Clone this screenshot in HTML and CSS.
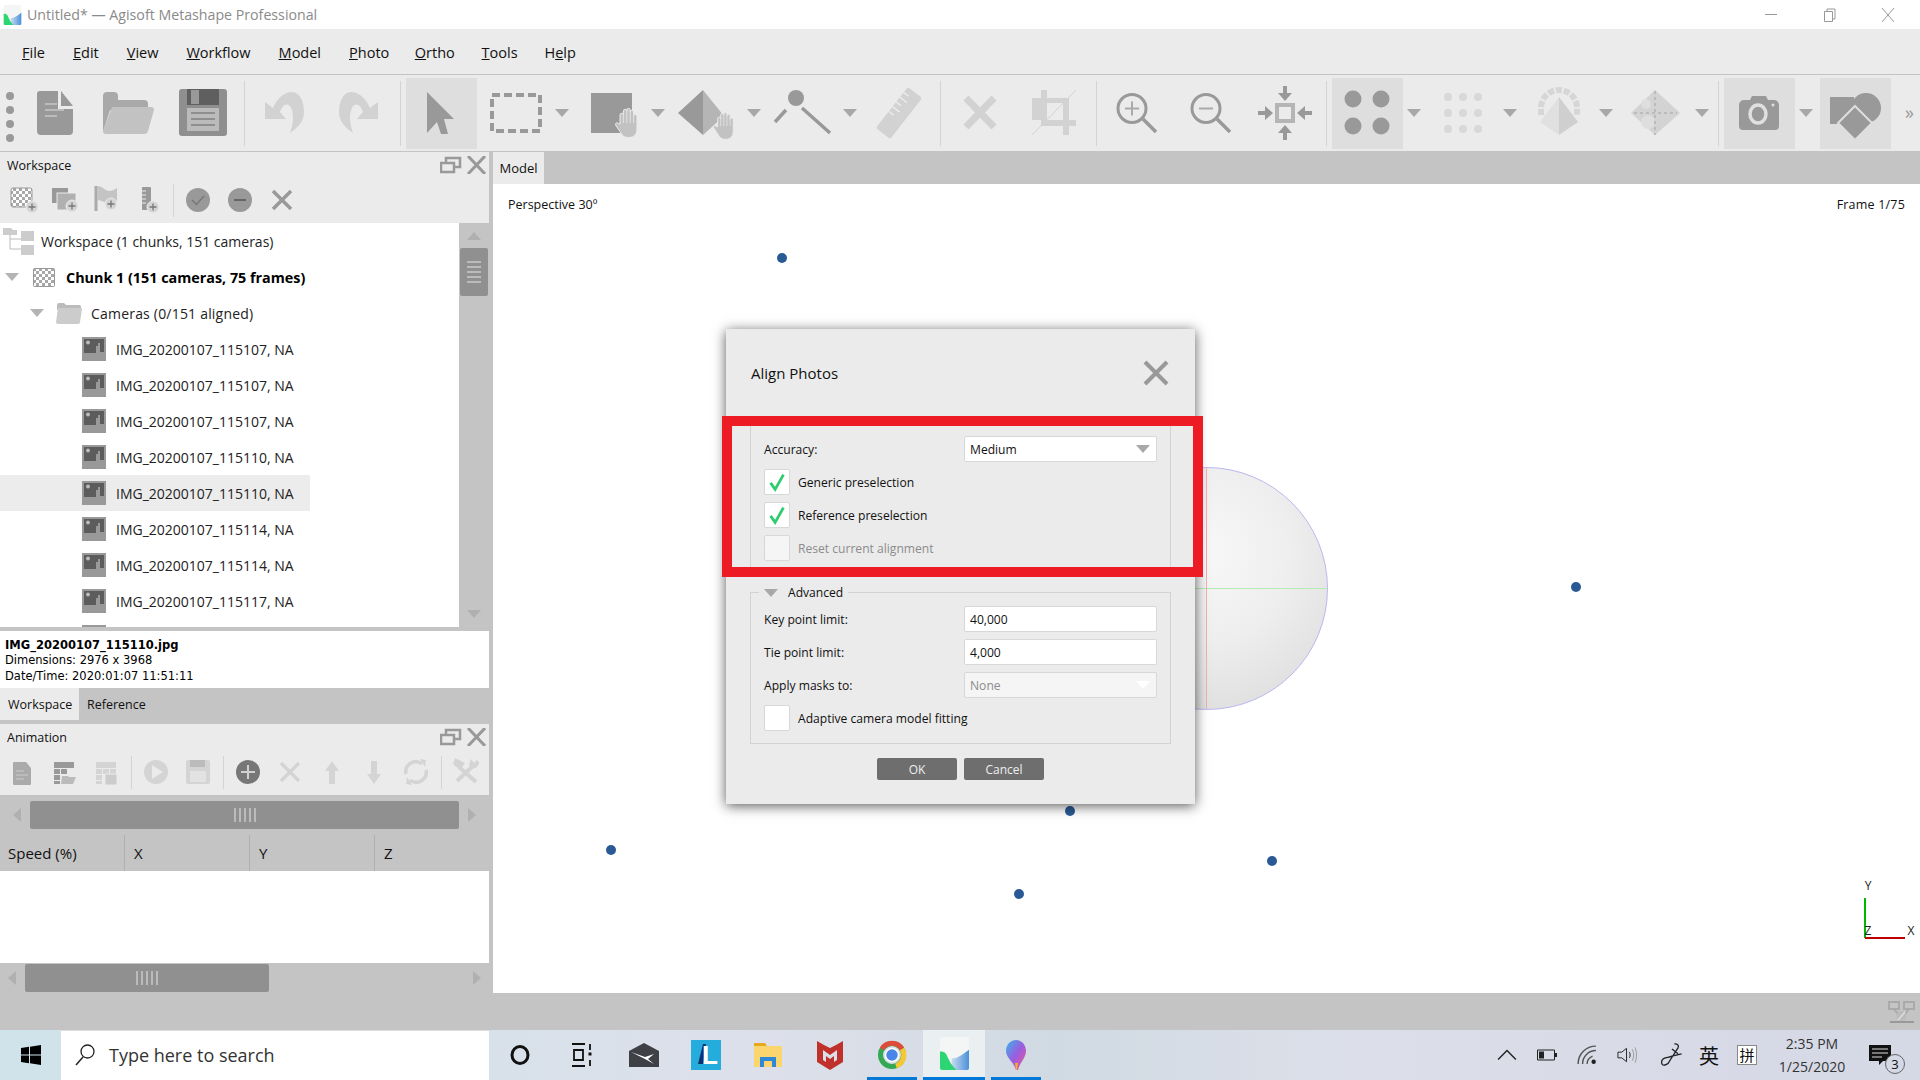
FILE: index.html
```html
<!DOCTYPE html>
<html lang="en">
<head>
    <meta charset="UTF-8">
    <title>Untitled* — Agisoft Metashape Professional</title>
    <link rel="stylesheet" href="styles.css">
</head>
<body>
    <svg class="defs" aria-hidden="true">
        <defs>
            <pattern id="chess" width="6" height="6" patternUnits="userSpaceOnUse">
                <rect width="6" height="6" fill="#fff"/>
                <rect width="3" height="3" fill="#a8a8a8"/>
                <rect x="3" y="3" width="3" height="3" fill="#a8a8a8"/>
            </pattern>
            <linearGradient id="msBlue" x1="0" y1="0" x2="1" y2="0">
                <stop offset="0" stop-color="#c8dcf0"/>
                <stop offset="1" stop-color="#4a90d9"/>
            </linearGradient>
            <linearGradient id="paint3d" x1="0" y1="0" x2="1" y2="1">
                <stop offset="0" stop-color="#38b6e8"/>
                <stop offset="0.5" stop-color="#9a5ce0"/>
                <stop offset="1" stop-color="#ef5a8a"/>
            </linearGradient>
            <symbol id="hand" viewBox="0 0 25 30">
                <path fill="#c2c2c2" stroke="#ebebeb" stroke-width="1" d="M5 16V7a1.7 1.7 0 0 1 3.4 0V3a1.7 1.7 0 0 1 3.4 0V2a1.7 1.7 0 0 1 3.4 0V4a1.7 1.7 0 0 1 3.4 0V8a1.7 1.7 0 0 1 3.4 0V21c0 5-3 8.500-8 8.500s-7-2-9-6L.6 17c-.8-2 2-3 3-1.500z"/>
                <path stroke="#e2e2e2" stroke-width="1" d="M8.400 6V15M11.800 3V15M15.200 3V15M18.600 6V15"/>
            </symbol>
            <symbol id="thumb" viewBox="0 0 24 24">
                <rect width="24" height="24" fill="#999"/>
                <path fill="#5c5c5c" d="M2 2h20v4h-6v3h-2v7H2z"/>
                <path fill="#5c5c5c" d="M18 6h4v9h-4z"/>
                <circle cx="6" cy="5.500" r="2" fill="#bbb"/>
            </symbol>
            <symbol id="appicon" viewBox="0 0 30 34">
                <rect width="30" height="34" rx="2" fill="#f4f6f6"/>
                <path fill="url(#msBlue)" d="M12 22c6 0 10-3 18-9v19a2 2 0 0 1-2 2H12z"/>
                <path fill="#2ed573" d="M0 15c6-1 7 4 9 8 2 5 5 8 8 11H2a2 2 0 0 1-2-2z"/>
            </symbol>
            <symbol id="plus" viewBox="0 0 14 14">
                <circle cx="7" cy="7" r="6" fill="#d4d4d4" stroke="#ebebeb"/>
                <path stroke="#777" stroke-width="1.300" d="M3.500 7h7M7 3.500v7"/>
            </symbol>
        </defs>
    </svg>

    <div class="titlebar">
        <svg class="title-icon"><use href="#appicon"/></svg>
        <span class="title-text">Untitled* — Agisoft Metashape Professional</span>
        <div class="win-btns">
            <svg class="win-btn" viewBox="0 0 14 14"><path d="M1 6.500h12" stroke="#999"/></svg>
            <svg class="win-btn" viewBox="0 0 14 14"><path d="M1.500 3.500h8v10h-8zM4 3.500V1h8v10h-2.500" fill="none" stroke="#999"/></svg>
            <svg class="win-btn" viewBox="0 0 14 14"><path d="M1 0l12 14M13 0L1 14" stroke="#999"/></svg>
        </div>
    </div>

    <nav class="menubar">
        <a><u>F</u>ile</a>
        <a><u>E</u>dit</a>
        <a><u>V</u>iew</a>
        <a><u>W</u>orkflow</a>
        <a><u>M</u>odel</a>
        <a><u>P</u>hoto</a>
        <a><u>O</u>rtho</a>
        <a><u>T</u>ools</a>
        <a>H<u>e</u>lp</a>
    </nav>

    <div class="toolbar">
        <div class="grip"><i></i><i></i><i></i><i></i></div>

        <div class="tool"><svg viewBox="0 0 71 71">
            <path fill="#999" d="M17 16a3 3 0 0 1 3-3h18v18h15v22a4 4 0 0 1-4 4H21a4 4 0 0 1-4-4z"/>
            <path fill="#999" d="M41 13l12 15H41z"/>
            <path stroke="#bbb" stroke-width="2" d="M25 26h12M25 32h19M25 38h12"/>
        </svg></div>
        <div class="tool"><svg viewBox="0 0 71 71">
            <path fill="#a9a9a9" d="M9 18a4 4 0 0 1 4-4h7a4 4 0 0 1 4 4v4h26a4 4 0 0 1 4 4v6H16L9 54z"/>
            <path fill="#c2c2c2" d="M18 29h39a3 3 0 0 1 3 3l-6 21a4 4 0 0 1-4 3H12a3 3 0 0 1-3-3z"/>
        </svg></div>
        <div class="tool"><svg viewBox="0 0 71 71">
            <rect x="11" y="11" width="48" height="47" rx="3" fill="#8f8f8f"/>
            <rect x="19" y="11" width="32" height="16" fill="#5f5f5f"/>
            <rect x="23" y="12" width="8" height="14" fill="#999"/>
            <rect x="19" y="30" width="32" height="23" fill="#bbb"/>
            <path stroke="#8f8f8f" stroke-width="2" d="M23 35h24M23 41h24M23 47h24"/>
        </svg></div>
        <div class="sep"></div>
        <div class="tool"><svg viewBox="0 0 71 71">
            <path fill="#d2d2d2" d="M15 24l8 6c5-12 13-16 19-16 8 0 12 10 12 20s-7 16-14 21c4-11 4-21 0-27-4-4-8 0-10 6l6 7H15z"/>
        </svg></div>
        <div class="tool"><svg viewBox="0 0 71 71">
            <path fill="#d2d2d2" transform="matrix(-1 0 0 1 69 0)" d="M15 24l8 6c5-12 13-16 19-16 8 0 12 10 12 20s-7 16-14 21c4-11 4-21 0-27-4-4-8 0-10 6l6 7H15z"/>
        </svg></div>
        <div class="sep"></div>
        <div class="tool active"><svg viewBox="0 0 71 71">
            <path fill="#999" d="M21 14l27 27H38l4 15h-7l-4-12-10 11z"/>
        </svg></div>
        <div class="tool"><svg viewBox="0 0 71 71">
            <rect x="12" y="17" width="48" height="36" fill="none" stroke="#999" stroke-width="4" stroke-dasharray="8 4"/>
        </svg></div>
        <div class="drop"><span class="tri"></span></div>
        <div class="tool"><svg viewBox="0 0 71 71">
            <rect x="15" y="15" width="41" height="40" fill="#999"/>
            <use href="#hand" x="39" y="30" width="25" height="30"/>
        </svg></div>
        <div class="drop"><span class="tri"></span></div>
        <div class="tool"><svg viewBox="0 0 71 71">
            <path fill="#999" d="M31 12L6 35l25 22z"/>
            <path fill="#b5b5b5" d="M31 12l21 26-21 19z"/>
            <use href="#hand" x="41" y="34" width="23" height="28"/>
        </svg></div>
        <div class="drop"><span class="tri"></span></div>
        <div class="tool"><svg viewBox="0 0 71 71">
            <circle cx="28" cy="20" r="8" fill="#999"/>
            <path stroke="#999" stroke-width="3.500" d="M18 32L7 44M34 30l28 25"/>
        </svg></div>
        <div class="drop"><span class="tri"></span></div>
        <div class="tool"><svg viewBox="0 0 71 71">
            <g transform="rotate(38 35 35)">
                <rect x="26" y="9" width="18" height="52" rx="2" fill="#d2d2d2"/>
                <path stroke="#ebebeb" stroke-width="1.500" d="M26 16h6M26 22h9M26 28h6M26 34h9M26 40h6"/>
            </g>
        </svg></div>
        <div class="sep"></div>
        <div class="tool"><svg viewBox="0 0 71 71">
            <path stroke="#d2d2d2" stroke-width="7" d="M20 20l28 29M48 20L20 49"/>
        </svg></div>
        <div class="tool"><svg viewBox="0 0 71 71">
            <path fill="#d2d2d2" d="M21 12h6v8h22v22h7v6h-7v9h-6v-9H21v-6h-9V20h9zM27 25v17h16V25z"/>
            <path stroke="#d2d2d2" d="M12 57L56 12"/>
        </svg></div>
        <div class="sep"></div>
        <div class="tool"><svg viewBox="0 0 71 71">
            <circle cx="30" cy="30.500" r="14" fill="none" stroke="#999" stroke-width="3"/>
            <path stroke="#999" stroke-width="3.500" d="M41 41l13 13"/>
            <path stroke="#aaa" stroke-width="2" d="M23 30.500h14M30 23.500v14"/>
        </svg></div>
        <div class="tool"><svg viewBox="0 0 71 71">
            <circle cx="30" cy="30.500" r="14" fill="none" stroke="#999" stroke-width="3"/>
            <path stroke="#999" stroke-width="3.500" d="M41 41l13 13"/>
            <path stroke="#aaa" stroke-width="2" d="M23 30.500h14"/>
        </svg></div>
        <div class="tool"><svg viewBox="0 0 71 71">
            <rect x="27" y="27" width="16" height="16" fill="none" stroke="#b5b5b5" stroke-width="4"/>
            <path fill="#999" d="M33 8h4v7h5l-7 8-7-8h5zM33 62h4v-7h5l-7-8-7 8h5zM8 33v4h7v5l8-7-8-7v5zM62 33v4h-7v5l-8-7 8-7v5z"/>
        </svg></div>
        <div class="sep"></div>
        <div class="tool active"><svg viewBox="0 0 71 71">
            <circle cx="21" cy="21" r="8.500" fill="#999"/>
            <circle cx="49" cy="21" r="8.500" fill="#999"/>
            <circle cx="21" cy="48" r="8.500" fill="#999"/>
            <circle cx="49" cy="48" r="8.500" fill="#999"/>
        </svg></div>
        <div class="drop"><span class="tri"></span></div>
        <div class="tool"><svg viewBox="0 0 71 71" fill="#d8d8d8">
            <circle cx="20" cy="19" r="4"/><circle cx="35" cy="19" r="4"/><circle cx="50" cy="19" r="4"/>
            <circle cx="20" cy="35" r="4"/><circle cx="35" cy="35" r="4"/><circle cx="50" cy="35" r="4"/>
            <circle cx="20" cy="51" r="4"/><circle cx="35" cy="51" r="4"/><circle cx="50" cy="51" r="4"/>
        </svg></div>
        <div class="drop"><span class="tri"></span></div>
        <div class="tool"><svg viewBox="0 0 71 71">
            <path fill="none" stroke="#d6d6d6" stroke-width="6" stroke-dasharray="6 2" d="M17 37v-7a18 18 0 0 1 36 0v7"/>
            <path fill="#e0e0e0" d="M35 19L16 44l19 13z"/>
            <path fill="#cfcfcf" d="M35 19l19 25-19 13z"/>
        </svg></div>
        <div class="drop"><span class="tri"></span></div>
        <div class="tool"><svg viewBox="0 0 71 71">
            <path fill="#d3d3d3" d="M35 12L11 35l24 22 25-22z"/>
            <circle cx="26" cy="26" r="5" fill="#dedede"/>
            <circle cx="28" cy="44" r="7" fill="#dedede"/>
            <path stroke="#bbb" stroke-width="2" stroke-dasharray="3 3" d="M35 13v44M14 35h43"/>
        </svg></div>
        <div class="drop"><span class="tri"></span></div>
        <div class="sep sep-tight"></div>
        <div class="tool active"><svg viewBox="0 0 71 71">
            <path fill="#999" d="M15 27a5 5 0 0 1 5-5h6l2-4h14l2 4h6a5 5 0 0 1 5 5v21a4 4 0 0 1-4 4H19a4 4 0 0 1-4-4z"/>
            <ellipse cx="34" cy="36" rx="8" ry="9" fill="none" stroke="#e0e0e0" stroke-width="3.500"/>
            <circle cx="49" cy="27" r="1.500" fill="#e0e0e0"/>
        </svg></div>
        <div class="drop"><span class="tri"></span></div>
        <div class="tool active"><svg viewBox="0 0 71 71">
            <rect x="10" y="19" width="24" height="27" fill="#999"/>
            <circle cx="46" cy="30" r="15" fill="#999"/>
            <path fill="#999" stroke="#dedede" stroke-width="2" d="M35 28l17 17-17 17-17-17z"/>
        </svg></div>
        <div class="more">»</div>
    </div>

    <div class="main">
        <aside class="side">
            <section class="panel">
                <div class="panel-head">
                    <span>Workspace</span>
                    <svg class="panel-ico" viewBox="0 0 46 18">
                        <path fill="none" stroke="#999" stroke-width="2.500" d="M1 7h13v9H1zM6 7V2h14v9h-6"/>
                        <path stroke="#999" stroke-width="3" d="M28 0l17 18M45 0L28 18"/>
                    </svg>
                </div>
                <div class="panel-tools">
                    <svg viewBox="0 0 42 36">
                        <rect x="10" y="6" width="21" height="19" rx="2" fill="url(#chess)" stroke="#999"/>
                        <use href="#plus" x="24" y="18" width="14" height="14"/>
                    </svg>
                    <svg viewBox="0 0 42 36">
                        <rect x="9" y="6" width="16" height="15" fill="#999"/>
                        <rect x="14" y="11" width="19" height="17" fill="#b0b0b0" stroke="#ebebeb"/>
                        <use href="#plus" x="22" y="17" width="14" height="14"/>
                    </svg>
                    <svg viewBox="0 0 42 36">
                        <path stroke="#aaa" stroke-width="3" d="M11 4v25"/>
                        <path fill="#c4c4c4" d="M12 4c6 0 8 5 12 5 3 0 6-2 8-3v13c-4 2-7 3-10 2-4-1-6-3-10-3z"/>
                        <use href="#plus" x="19" y="15" width="14" height="14"/>
                    </svg>
                    <svg viewBox="0 0 42 36">
                        <rect x="15" y="5" width="9" height="23" rx="1" fill="#999"/>
                        <path stroke="#ebebeb" d="M15 9h4M15 13h4M15 17h4M15 21h4"/>
                        <use href="#plus" x="19" y="18" width="14" height="14"/>
                    </svg>
                    <div class="sep"></div>
                    <svg viewBox="0 0 42 36">
                        <circle cx="21" cy="18" r="12" fill="#999"/>
                        <path fill="none" stroke="#777" stroke-width="1.500" d="M15 18l4.500 4.500L27 14"/>
                    </svg>
                    <svg viewBox="0 0 42 36">
                        <circle cx="21" cy="18" r="12" fill="#999"/>
                        <path stroke="#666" stroke-width="2" d="M15 18h12"/>
                    </svg>
                    <svg viewBox="0 0 42 36">
                        <path stroke="#999" stroke-width="3.500" d="M12 9l18 18M30 9L12 27"/>
                    </svg>
                </div>
            </section>

            <div class="tree">
                <div class="tree-list">
                    <div class="row">
                        <svg class="ws-ico" viewBox="0 0 31 28">
                            <path fill="none" stroke="#bbb" d="M7 8v14h11M7 12h11"/>
                            <path fill="#ccc" d="M0 1h8l2 2h4v5H0zM18 4h13v10H18zM18 18h13v10H18z"/>
                        </svg>
                        <span>Workspace (1 chunks, 151 cameras)</span>
                    </div>
                    <div class="row row-bold">
                        <span class="tri tri-tree"></span>
                        <svg class="chunk-ico" viewBox="0 0 22 19"><rect x=".5" y=".5" width="21" height="18" rx="1" fill="url(#chess)" stroke="#999"/></svg>
                        <span>Chunk 1 (151 cameras, 75 frames)</span>
                    </div>
                    <div class="row row-cams">
                        <span class="tri tri-tree"></span>
                        <svg class="folder-ico" viewBox="0 0 26 21">
                            <path fill="#bbb" d="M1 2a2 2 0 0 1 2-2h5l2 2h13a2 2 0 0 1 2 2v3H1z"/>
                            <path fill="#ccc" d="M2 5h23a1 1 0 0 1 1 1l-2 13a2 2 0 0 1-2 2H2a2 2 0 0 1-2-2z"/>
                        </svg>
                        <span>Cameras (0/151 aligned)</span>
                    </div>
                    <div class="row row-img"><svg class="thumb"><use href="#thumb"/></svg><span>IMG_20200107_115107, NA</span></div>
                    <div class="row row-img"><svg class="thumb"><use href="#thumb"/></svg><span>IMG_20200107_115107, NA</span></div>
                    <div class="row row-img"><svg class="thumb"><use href="#thumb"/></svg><span>IMG_20200107_115107, NA</span></div>
                    <div class="row row-img"><svg class="thumb"><use href="#thumb"/></svg><span>IMG_20200107_115110, NA</span></div>
                    <div class="row row-img selected"><svg class="thumb"><use href="#thumb"/></svg><span>IMG_20200107_115110, NA</span></div>
                    <div class="row row-img"><svg class="thumb"><use href="#thumb"/></svg><span>IMG_20200107_115114, NA</span></div>
                    <div class="row row-img"><svg class="thumb"><use href="#thumb"/></svg><span>IMG_20200107_115114, NA</span></div>
                    <div class="row row-img"><svg class="thumb"><use href="#thumb"/></svg><span>IMG_20200107_115117, NA</span></div>
                    <div class="row row-img"><svg class="thumb"><use href="#thumb"/></svg></div>
                </div>
                <div class="vscroll">
                    <span class="tri tri-up"></span>
                    <div class="vthumb"><span class="grip-h"></span></div>
                    <span class="tri tri-down"></span>
                </div>
            </div>

            <div class="info">
                <b>IMG_20200107_115110.jpg</b>
                <div>Dimensions: 2976 x 3968</div>
                <div>Date/Time: 2020:01:07 11:51:11</div>
            </div>

            <div class="tabs">
                <span class="tab on">Workspace</span>
                <span class="tab">Reference</span>
            </div>

            <section class="panel panel-anim">
                <div class="panel-head">
                    <span>Animation</span>
                    <svg class="panel-ico" viewBox="0 0 46 18">
                        <path fill="none" stroke="#999" stroke-width="2.500" d="M1 7h13v9H1zM6 7V2h14v9h-6"/>
                        <path stroke="#999" stroke-width="3" d="M28 0l17 18M45 0L28 18"/>
                    </svg>
                </div>
                <div class="panel-tools">
                    <svg viewBox="0 0 42 36">
                        <path fill="#aaa" d="M12 9a1 1 0 0 1 1-1h12l5 6v16a1 1 0 0 1-1 1H13a1 1 0 0 1-1-1z"/>
                        <path stroke="#ccc" d="M15 17h8M15 21h12M15 25h8"/>
                    </svg>
                    <svg viewBox="0 0 42 36">
                        <path fill="#999" d="M11 8h20v6H11zM11 15h6v5h-6zM18 15h6v5h-6zM11 21h6v5h-6zM11 27h6v3h-6z"/>
                        <path fill="#bbb" d="M19 22h6l1 1h7l-3 7H18z"/>
                    </svg>
                    <svg viewBox="0 0 42 36">
                        <path fill="#d4d4d4" d="M11 8h20v6H11zM11 15h6v5h-6zM18 15h6v5h-6zM25 15h6v5h-6zM11 21h6v5h-6zM11 27h6v3h-6z"/>
                        <rect x="20" y="20" width="12" height="11" rx="1" fill="#ccc" stroke="#ebebeb"/>
                    </svg>
                    <div class="sep"></div>
                    <svg viewBox="0 0 42 36">
                        <circle cx="21" cy="18" r="12" fill="#d4d4d4"/>
                        <path fill="#ebebeb" d="M17 11l11 7-11 7z"/>
                    </svg>
                    <svg viewBox="0 0 42 36">
                        <rect x="9" y="6" width="24" height="24" rx="2" fill="#d4d4d4"/>
                        <rect x="13" y="6" width="15" height="7" fill="#bbb"/>
                        <rect x="13" y="17" width="16" height="11" fill="#e2e2e2"/>
                    </svg>
                    <div class="sep"></div>
                    <svg viewBox="0 0 42 36">
                        <circle cx="21" cy="18" r="12" fill="#777"/>
                        <path stroke="#d0d0d0" stroke-width="2" d="M14 18h14M21 11v14"/>
                    </svg>
                    <svg viewBox="0 0 42 36">
                        <path stroke="#d4d4d4" stroke-width="3.500" d="M12 9l18 18M30 9L12 27"/>
                    </svg>
                    <svg viewBox="0 0 42 36">
                        <path fill="#d4d4d4" d="M21 7l7 10h-4v13h-6V17h-4z"/>
                    </svg>
                    <svg viewBox="0 0 42 36">
                        <path fill="#d4d4d4" d="M21 30l7-10h-4V7h-6v13h-4z"/>
                    </svg>
                    <svg viewBox="0 0 42 36">
                        <path fill="none" stroke="#d4d4d4" stroke-width="3.500" d="M11 20a10 10 0 0 1 16-10M31 16a10 10 0 0 1-16 10"/>
                        <path fill="#d4d4d4" d="M25 5l6 1-1 7zM17 31l-6-1 1-7z"/>
                    </svg>
                    <div class="sep"></div>
                    <svg viewBox="0 0 42 36">
                        <path stroke="#d4d4d4" stroke-width="4" d="M14 13l17 15M30 10L12 27"/>
                        <path fill="#d4d4d4" d="M10 4l10 5-5 7-7-6zM26 5l3 4 3-3 2 2c0 4-3 7-7 6l-3-3z"/>
                    </svg>
                </div>
            </section>

            <div class="hscroll hscroll-top">
                <span class="tri tri-left"></span>
                <div class="hthumb hthumb-wide"><span class="grip-v"></span></div>
                <span class="tri tri-right"></span>
            </div>

            <div class="anim-head">
                <span>Speed (%)</span>
                <span>X</span>
                <span>Y</span>
                <span>Z</span>
            </div>
            <div class="anim-body"></div>

            <div class="hscroll hscroll-bottom">
                <span class="tri tri-left"></span>
                <div class="hthumb hthumb-short"><span class="grip-v"></span></div>
                <span class="tri tri-right"></span>
            </div>
        </aside>

        <div class="view">
            <div class="view-tabs"><span class="view-tab">Model</span></div>
            <div class="canvas">
                <span class="label-persp">Perspective 30º</span>
                <span class="label-frame">Frame 1/75</span>

                <div class="sphere"><i class="sphere-h"></i><i class="sphere-v"></i></div>

                <i class="dot dot1"></i>
                <i class="dot dot2"></i>
                <i class="dot dot3"></i>
                <i class="dot dot4"></i>
                <i class="dot dot5"></i>
                <i class="dot dot6"></i>

                <svg class="axes" viewBox="0 0 65 70">
                    <path stroke="#00b800" stroke-width="2" d="M10 23v40"/>
                    <path stroke="#c00000" stroke-width="2" d="M10 63h40"/>
                    <text x="13" y="15">Y</text>
                    <text x="13" y="60">Z</text>
                    <text x="56" y="60">X</text>
                </svg>

                <div class="dialog">
                    <div class="dlg-head">
                        <span>Align Photos</span>
                        <svg class="dlg-close" viewBox="0 0 26 26"><path stroke="#999" stroke-width="4" d="M2 2l22 22M24 2L2 24"/></svg>
                    </div>

                    <div class="group group-main">
                        <div class="field">
                            <label>Accuracy:</label>
                            <div class="combo"><span>Medium</span><span class="tri"></span></div>
                        </div>
                        <div class="check"><span class="box"><svg viewBox="0 0 26 26"><path fill="none" stroke="#2ecc71" stroke-width="3" d="M6 14l5 7 9-16"/></svg></span>Generic preselection</div>
                        <div class="check"><span class="box"><svg viewBox="0 0 26 26"><path fill="none" stroke="#2ecc71" stroke-width="3" d="M6 14l5 7 9-16"/></svg></span>Reference preselection</div>
                        <div class="check off"><span class="box"></span>Reset current alignment</div>
                    </div>

                    <div class="group group-adv">
                        <div class="legend"><span class="tri"></span>Advanced</div>
                        <div class="field">
                            <label>Key point limit:</label>
                            <div class="combo"><span>40,000</span></div>
                        </div>
                        <div class="field">
                            <label>Tie point limit:</label>
                            <div class="combo"><span>4,000</span></div>
                        </div>
                        <div class="field">
                            <label>Apply masks to:</label>
                            <div class="combo off"><span>None</span><span class="tri"></span></div>
                        </div>
                        <div class="check"><span class="box"></span>Adaptive camera model fitting</div>
                    </div>

                    <div class="dlg-btns">
                        <button type="button">OK</button>
                        <button type="button">Cancel</button>
                    </div>

                    <div class="redbox"></div>
                </div>
            </div>
        </div>
    </div>

    <div class="statusbar">
        <svg viewBox="0 0 28 22">
            <path fill="none" stroke="#aaa" stroke-width="2" d="M1 1h10v7H1zM16 1h10v7H16zM6 8l4 5M21 8l-4 5"/>
            <path stroke="#999" stroke-width="2" d="M2 21h24"/>
            <circle cx="13.500" cy="15" r="5" fill="#bbb"/>
            <path stroke="#ddd" stroke-width="1.500" d="M10 19l7-8"/>
        </svg>
    </div>

    <div class="taskbar">
        <div class="start">
            <svg viewBox="0 0 20 20"><path d="M0 3l8-1.200V9.500H0zM9 1.700L20 0v9.500H9zM0 10.500h8v7.700L0 17zM9 10.500h11V20L9 18.300z"/></svg>
        </div>
        <div class="search">
            <svg viewBox="0 0 20 22"><circle cx="12.500" cy="7.500" r="6.500" fill="none" stroke="#222" stroke-width="1.300"/><path stroke="#222" stroke-width="1.500" d="M8 13L1 21"/></svg>
            <span>Type here to search</span>
        </div>
        <div class="task"><svg viewBox="0 0 32 32"><ellipse cx="16" cy="16" rx="8" ry="8.500" fill="none" stroke="#111" stroke-width="3"/></svg></div>
        <div class="task"><svg viewBox="0 0 32 32"><path fill="none" stroke="#111" stroke-width="1.800" d="M6 5h13M6 27h13M8 11h9v10H8zM24 5v6M24 21v6"/><path stroke="#111" stroke-width="3" d="M22.500 15h3"/></svg></div>
        <div class="task"><svg viewBox="0 0 32 32">
            <path fill="#3f4046" d="M1 12L16 4l15 8v16H1z"/>
            <path fill="#fff" d="M3 13l14 5 9-3-6 5 6 5-9-5-14-7z"/>
        </svg></div>
        <div class="task"><svg viewBox="0 0 32 32">
            <rect x="1" y="1" width="30" height="30" fill="#24acdc"/>
            <path fill="#12306e" d="M8 25L13 5h3l-3 20z"/>
            <text class="ltr" x="12" y="25">L</text>
        </svg></div>
        <div class="task"><svg viewBox="0 0 32 32">
            <path fill="#e8a81c" d="M2 4h11l2 3h-13z"/>
            <rect x="2" y="7" width="28" height="21" fill="#fbd56d"/>
            <path fill="none" stroke="#2f88d8" stroke-width="4" d="M10 28v-8h12v8"/>
        </svg></div>
        <div class="task"><svg viewBox="0 0 32 32">
            <path fill="#c0312b" d="M3 2l7 4 6 3 6-3 7-4v21l-13 8L3 23z"/>
            <path fill="#dcdfe8" d="M9 11l7 5 7-5v10l-3 2v-6l-4 3-4-3v6l-3-2z"/>
        </svg></div>
        <div class="task"><svg viewBox="0 0 32 32">
            <circle cx="16" cy="16" r="11.500" fill="none" stroke="#34a853" stroke-width="5"/>
            <path fill="none" stroke="#e04b3a" stroke-width="5" d="M6 10a11.500 11.500 0 0 1 20 0"/>
            <path fill="none" stroke="#f8c830" stroke-width="5" d="M26 10a11.500 11.500 0 0 1-6 17"/>
            <circle cx="16" cy="16" r="6.500" fill="#4a86e8" stroke="#fff" stroke-width="1.500"/>
        </svg></div>
        <div class="task task-active"><svg class="app-big"><use href="#appicon"/></svg></div>
        <div class="task"><svg viewBox="0 0 32 32">
            <path fill="url(#paint3d)" d="M16 1c6 0 10 5 10 11 0 7-6 11-8 19h-2c-2-8-10-12-10-19C6 6 10 1 16 1z"/>
            <path fill="#f2b32a" d="M15 24h3l-1 7h-1z"/>
        </svg></div>

        <div class="tray">
            <div class="tray-item"><svg viewBox="0 0 18 10"><path fill="none" stroke="#222" stroke-width="1.300" d="M1 9l8-8 8 8"/></svg></div>
            <div class="tray-item"><svg viewBox="0 0 20 12"><path fill="none" stroke="#222" d="M.5 1h17v10H.500z"/><path fill="#222" d="M2 2.500h5v7H2zM18 4h2v4h-2z"/></svg></div>
            <div class="tray-item"><svg viewBox="0 0 18 18"><path fill="none" stroke="#555" stroke-width="1.300" d="M1 17a16 16 0 0 1 16-16M5 17a12 12 0 0 1 12-12M9 17a8 8 0 0 1 5-7"/><circle cx="15" cy="15" r="2" fill="#222"/></svg></div>
            <div class="tray-item"><svg viewBox="0 0 21 18"><path fill="none" stroke="#222" d="M1 6h4l5-4v14l-5-4H1z"/><path fill="none" stroke="#222" d="M13 6c1 2 1 4 0 6"/><path fill="none" stroke="#999" d="M16 3c2 4 2 8 0 12M19 1c2 5 2 11 0 16"/></svg></div>
            <div class="tray-item tray-pen"><svg viewBox="0 0 20 20"><path fill="none" stroke="#222" stroke-width="1.100" d="M12 1c2-1 4 1 3 3L8 15c-1 3-5 4-6 3s-1-4 1-5 5-1 7-2l8-2M10 5l5 4"/></svg></div>
            <div class="tray-item tray-cjk">英</div>
            <div class="tray-item"><span class="pin">拼</span></div>
            <div class="clock"><div>2:35 PM</div><div>1/25/2020</div></div>
            <div class="notif">
                <svg viewBox="0 0 30 28"><path fill="#111" d="M0 0h22v16h-8l-4 4v-4H0z"/><path stroke="#ddd" d="M3 4h16M3 8h16M3 12h10"/></svg>
                <span class="badge">3</span>
            </div>
        </div>
    </div>
</body>
</html>
```

FILE: styles.css
```css
* {
    box-sizing: border-box;
}

html, body {
    margin: 0;
    padding: 0;
}

body {
    width: 1920px;
    height: 1080px;
    overflow: hidden;
    display: flex;
    flex-direction: column;
    font-family: "Open Sans", "Noto Sans", sans-serif;
    font-size: 14px;
    color: #111;
    background-color: #c4c4c4;
}

svg {
    display: block;
    flex: none;
}

.defs {
    width: 0;
    height: 0;
}

/* title bar */
.titlebar {
    height: 29px;
    flex: none;
    display: flex;
    align-items: center;
    background-color: #fff;
    padding-left: 3px;
}

.title-icon {
    width: 19px;
    height: 20px;
}

.title-text {
    margin-left: 5px;
    color: #8a8a8a;
    font-size: 14.200px;
}

.win-btns {
    margin-left: auto;
    display: flex;
    gap: 46px;
    padding-right: 25px;
}

.win-btn {
    width: 14px;
    height: 14px;
}

.win-btn:nth-child(1) {
    margin-right: -1px;
}

.win-btn:nth-child(2) {
    margin-right: -2px;
}

/* menu */
.menubar {
    height: 46px;
    flex: none;
    display: flex;
    align-items: center;
    gap: 28px;
    padding: 2px 0 0 22px;
    background-color: #ebebeb;
    border-bottom: 1px solid #c4c4c4;
    font-size: 14.500px;
}

.menubar a:nth-child(7) {
    margin-left: -2.500px;
}

.menubar a:nth-child(8),
.menubar a:nth-child(9) {
    margin-left: -1.200px;
}

/* main toolbar */
.toolbar {
    height: 77px;
    flex: none;
    display: flex;
    align-items: flex-start;
    background-color: #ebebeb;
    border-bottom: 1px solid #c4c4c4;
    padding-top: 3px;
}

.grip {
    width: 20px;
    padding: 14px 0 0 6px;
    display: flex;
    flex-direction: column;
    gap: 6px;
}

.grip i {
    display: block;
    width: 8px;
    height: 8px;
    border-radius: 50%;
    background-color: #999;
}

.tool {
    width: 71px;
    height: 71px;
    flex: none;
}

.tool + .tool {
    margin-left: 3px;
}

.tool.active {
    background-color: #dedede;
}

.tool svg {
    width: 71px;
    height: 71px;
}

.drop {
    width: 25px;
    height: 71px;
    flex: none;
    padding: 31px 0 0 4px;
}

.tri {
    display: block;
    width: 0;
    height: 0;
    flex: none;
    border-left: 7px solid transparent;
    border-right: 7px solid transparent;
    border-top: 8px solid #a8a8a8;
}

.sep {
    width: 1px;
    height: 65px;
    flex: none;
    margin: 3px 5px 0;
    background-color: #d4d4d4;
}

.sep-tight {
    margin-left: 2px;
}

.more {
    margin: 22px 0 0 14px;
    color: #999;
    font-size: 18px;
}

/* left column */
.main {
    height: 841px;
    flex: none;
    display: flex;
}

.side {
    width: 493px;
    flex: none;
    display: flex;
    flex-direction: column;
}

.panel {
    width: 489px;
    height: 71px;
    flex: none;
    background-color: #ebebeb;
}

.panel-head {
    height: 28px;
    display: flex;
    align-items: center;
    justify-content: space-between;
    padding: 0 3px 2px 7px;
    font-size: 12.500px;
}

.panel-ico {
    width: 46px;
    height: 18px;
}

.panel-tools {
    height: 43px;
    display: flex;
    align-items: center;
    padding: 0 0 3px 1px;
}

.panel-tools svg {
    width: 42px;
    height: 36px;
}

.panel-tools .sep {
    height: 33px;
    margin: 0 3px 0 4px;
}

.tree {
    height: 404px;
    width: 489px;
    flex: none;
    display: flex;
}

.tree-list {
    width: 459px;
    flex: none;
    overflow: hidden;
    background-color: #fff;
}

.row {
    height: 36px;
    display: flex;
    align-items: center;
    font-size: 14px;
    color: #222;
}

.ws-ico {
    width: 31px;
    height: 28px;
    margin: 0 7px 0 3px;
}

.row-bold {
    font-weight: 700;
    font-size: 14.350px;
    color: #000;
    padding-left: 5px;
}

.tri-tree {
    border-top-color: #b4b4b4;
}

.chunk-ico {
    width: 22px;
    height: 19px;
    margin: 0 11px 0 14px;
}

.row-cams {
    padding-left: 30px;
    letter-spacing: 0.200px;
}

.folder-ico {
    width: 26px;
    height: 21px;
    margin: 0 9px 0 12px;
}

.row-img {
    padding-left: 82px;
}

.row-img.selected {
    width: 310px;
    background-color: #ececec;
}

.thumb {
    width: 24px;
    height: 24px;
    margin-right: 10px;
}

.vscroll {
    width: 30px;
    flex: none;
    display: flex;
    flex-direction: column;
    align-items: center;
    padding: 9px 0 9px;
}

.tri-up {
    border-top: 0;
    border-bottom: 8px solid #b0b0b0;
}

.tri-down {
    margin-top: auto;
    border-top-color: #b0b0b0;
}

.vthumb {
    width: 28px;
    height: 48px;
    margin-top: 8px;
    border-radius: 2px;
    background-color: #909090;
    display: flex;
    align-items: center;
    justify-content: center;
}

.grip-h {
    width: 14px;
    height: 22px;
    background: repeating-linear-gradient(to bottom, #bbb 0, #bbb 2px, transparent 2px, transparent 5px);
}

.info {
    width: 489px;
    height: 57px;
    flex: none;
    margin-top: 4px;
    padding: 5px 0 0 5px;
    background-color: #fff;
    font-family: "DejaVu Sans", sans-serif;
    font-size: 11.500px;
    line-height: 16px;
    color: #000;
}

.info b {
    display: block;
    margin-top: 1px;
    margin-bottom: -1px;
}

.tabs {
    height: 32px;
    flex: none;
    display: flex;
    font-size: 12.500px;
}

.tab {
    padding: 1px 8px 0;
    line-height: 32px;
}

.tab.on {
    width: 79px;
    background-color: #ebebeb;
}

.panel-anim {
    margin-top: 4px;
}

.hscroll {
    flex: none;
    width: 489px;
    display: flex;
    align-items: center;
}

.hscroll-top {
    height: 40px;
    padding-left: 13px;
}

.hscroll-bottom {
    height: 30px;
    padding: 0 8px;
}

.tri-left,
.tri-right {
    border-top: 7px solid transparent;
    border-bottom: 7px solid transparent;
}

.tri-left {
    border-left: 0;
    border-right: 8px solid #b0b0b0;
}

.tri-right {
    border-right: 0;
    border-left: 8px solid #b0b0b0;
}

.hthumb {
    height: 28px;
    margin: 0 9px;
    border-radius: 2px;
    background-color: #909090;
    display: flex;
    align-items: center;
    justify-content: center;
}

.hthumb-wide {
    width: 429px;
}

.hthumb-short {
    width: 244px;
    margin-right: auto;
}

.grip-v {
    width: 22px;
    height: 14px;
    background: repeating-linear-gradient(to right, #bbb 0, #bbb 2px, transparent 2px, transparent 5px);
}

.anim-head {
    width: 489px;
    height: 36px;
    flex: none;
    display: grid;
    grid-template-columns: 124px 125px 125px 115px;
    font-size: 15px;
    line-height: 36px;
}

.anim-head span {
    padding-left: 9px;
    border-left: 1px solid #b0b0b0;
}

.anim-head span:first-child {
    padding-left: 8px;
    border-left: 0;
}

.anim-body {
    width: 489px;
    height: 92px;
    flex: none;
    background-color: #fff;
}

/* 3d view */
.view {
    flex: 1;
    display: flex;
    flex-direction: column;
}

.view-tabs {
    height: 32px;
    flex: none;
    background-color: #c4c4c4;
}

.view-tab {
    display: block;
    width: 51px;
    height: 32px;
    line-height: 32px;
    text-align: center;
    font-size: 13px;
    background-color: #ebebeb;
}

.canvas {
    position: relative;
    flex: 1;
    background-color: #fff;
}

.label-persp,
.label-frame {
    position: absolute;
    top: 12px;
    font-size: 12.500px;
    line-height: 18px;
}

.label-persp {
    left: 15px;
}

.label-frame {
    right: 15px;
    letter-spacing: 0.200px;
}

.sphere {
    position: absolute;
    left: 592px;
    top: 283px;
    width: 243px;
    height: 243px;
    border-radius: 50%;
    border: 1px solid #b8b8f0;
    background: radial-gradient(circle at 48% 35%, #f8f8f8 0, #eeeeee 45%, #d8d8d8 100%);
    overflow: hidden;
}

.sphere-h {
    position: absolute;
    left: 0;
    right: 0;
    top: 120px;
    height: 1px;
    background-color: #b4ecb4;
}

.sphere-v {
    position: absolute;
    top: 0;
    bottom: 0;
    left: 120px;
    width: 1px;
    background-color: #f0b0b0;
}

.dot {
    position: absolute;
    width: 10px;
    height: 10px;
    border-radius: 50%;
    background-color: #2a5a95;
}

.dot1 { left: 284px; top: 69px; }
.dot2 { left: 1078px; top: 398px; }
.dot3 { left: 113px; top: 661px; }
.dot4 { left: 572px; top: 622px; }
.dot5 { left: 774px; top: 672px; }
.dot6 { left: 521px; top: 705px; }

.axes {
    position: absolute;
    left: 1362px;
    top: 691px;
    width: 65px;
    height: 70px;
}

.axes text {
    font-family: "Open Sans", sans-serif;
    font-size: 12px;
    text-anchor: middle;
    fill: #222;
}

/* dialog */
.dialog {
    position: absolute;
    left: 233px;
    top: 145px;
    width: 469px;
    height: 475px;
    padding: 0 24px;
    background-color: #ebebeb;
    box-shadow: 0 2px 12px rgba(0, 0, 0, 0.65);
    font-size: 12.100px;
}

.dlg-head {
    height: 91px;
    display: flex;
    align-items: flex-start;
    justify-content: space-between;
    padding: 31px 2px 0 1px;
    font-size: 15px;
    line-height: 26px;
}

.dlg-close {
    width: 26px;
    height: 26px;
}

.group {
    border: 1px solid #d2d2d2;
    padding: 15px 13px 0;
    display: flex;
    flex-direction: column;
    gap: 7px;
}

.group-main {
    height: 151px;
    margin-bottom: 21px;
}

.group-adv {
    position: relative;
    height: 152px;
    padding-top: 13px;
}

.legend {
    position: absolute;
    left: 8px;
    top: -8px;
    display: flex;
    align-items: center;
    gap: 10px;
    padding: 0 5px;
    background-color: #ebebeb;
    line-height: 16px;
}

.field {
    height: 26px;
    display: flex;
    align-items: center;
    justify-content: space-between;
}

.combo {
    width: 193px;
    height: 26px;
    display: flex;
    align-items: center;
    justify-content: space-between;
    padding: 0 6px 0 5px;
    background-color: #fff;
    border: 1px solid #d8d8d8;
    border-radius: 2px;
}

.combo.off {
    background-color: #f5f5f5;
    color: #8c8c8c;
}

.combo.off .tri {
    border-top-color: #fff;
}

.check {
    height: 26px;
    display: flex;
    align-items: center;
    gap: 8px;
}

.check.off {
    color: #8c8c8c;
}

.box {
    width: 26px;
    height: 26px;
    flex: none;
    background-color: #fff;
    border: 1px solid #d8d8d8;
    border-radius: 2px;
}

.box svg {
    width: 24px;
    height: 24px;
}

.check.off .box {
    background-color: #f5f5f5;
}

.dlg-btns {
    display: flex;
    justify-content: center;
    gap: 7px;
    margin-top: 14px;
}

.dlg-btns button {
    width: 80px;
    height: 22px;
    padding: 0;
    border: 0;
    border-radius: 2px;
    background-color: #6e6e6e;
    color: #eee;
    font-family: inherit;
    font-size: 12px;
}

.redbox {
    position: absolute;
    left: -4px;
    top: 87px;
    width: 481px;
    height: 161px;
    border: 10px solid #ed1c24;
}

/* status bar */
.statusbar {
    height: 37px;
    flex: none;
    display: flex;
    align-items: center;
    justify-content: flex-end;
    padding-right: 4px;
    background-color: #c4c4c4;
}

.statusbar svg {
    width: 28px;
    height: 22px;
}

/* taskbar */
.taskbar {
    height: 50px;
    flex: none;
    display: flex;
    background: linear-gradient(to right, #cfe3ea 0, #dde0ea 40%, #d0dae2 55%, #dcdfe9 70%, #d5d8e5 100%);
}

.start {
    width: 61px;
    display: flex;
    align-items: center;
    justify-content: center;
}

.start svg {
    width: 20px;
    height: 20px;
}

.search {
    width: 428px;
    display: flex;
    align-items: center;
    gap: 14px;
    padding: 0 0 1px 14px;
    background-color: #fff;
    border-top: 1px solid #ddd;
    font-size: 18px;
    color: #333;
}

.search svg {
    width: 20px;
    height: 22px;
}

.task {
    position: relative;
    width: 62px;
    display: flex;
    align-items: center;
    justify-content: center;
}

.task svg {
    width: 32px;
    height: 32px;
}

.task:nth-of-type(9)::after,
.task:nth-of-type(11)::after {
    content: "";
    position: absolute;
    left: 6px;
    right: 6px;
    bottom: 0;
    height: 3px;
    background-color: #0078d7;
}

.task .app-big {
    width: 29px;
    height: 33px;
}

.task-active {
    background-color: #eaeff2;
    border-bottom: 3px solid #0078d7;
}

.ltr {
    font-family: "Liberation Sans", sans-serif;
    font-weight: 700;
    font-size: 26px;
    fill: #fff;
}

.tray {
    margin-left: auto;
    display: flex;
    align-items: center;
    padding-right: 6px;
}

.tray-item {
    width: 40px;
    display: flex;
    align-items: center;
    justify-content: center;
}

.tray-item svg {
    width: 20px;
    height: 20px;
}

.tray-pen {
    padding-left: 9px;
}

.tray-pen svg {
    width: 24px;
    height: 24px;
}

.tray-cjk {
    font-family: "Noto Sans CJK SC", sans-serif;
    font-size: 20px;
    padding-left: 4px;
}

.pin {
    width: 20px;
    height: 20px;
    border: 1px solid #888;
    background-color: #fff;
    font-family: "Noto Sans CJK SC", sans-serif;
    font-size: 15px;
    line-height: 18px;
    text-align: center;
}

.clock {
    width: 90px;
    text-align: center;
    font-size: 14px;
    line-height: 23px;
    color: #333;
}

.notif {
    position: relative;
    width: 57px;
    height: 50px;
    padding: 15px 0 0 12px;
}

.notif svg {
    width: 30px;
    height: 28px;
}

.badge {
    position: absolute;
    left: 28px;
    top: 24px;
    width: 20px;
    height: 20px;
    border: 1px solid #666;
    border-radius: 50%;
    background-color: #d5d8e5;
    font-size: 13px;
    line-height: 18px;
    text-align: center;
}
```
